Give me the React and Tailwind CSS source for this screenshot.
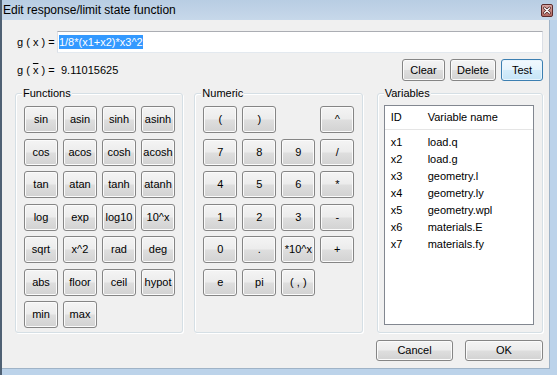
import React from "react";

const FUNCTIONS = [
  "sin", "asin", "sinh", "asinh",
  "cos", "acos", "cosh", "acosh",
  "tan", "atan", "tanh", "atanh",
  "log", "exp", "log10", "10^x",
  "sqrt", "x^2", "rad", "deg",
  "abs", "floor", "ceil", "hypot",
  "min", "max",
];

// null = empty cell in the keypad
const NUMERIC = [
  "(", ")", null, "^",
  "7", "8", "9", "/",
  "4", "5", "6", "*",
  "1", "2", "3", "-",
  "0", ".", "*10^x", "+",
  "e", "pi", "( , )", null,
];

const VARIABLES = [
  ["x1", "load.q"],
  ["x2", "load.g"],
  ["x3", "geometry.l"],
  ["x4", "geometry.ly"],
  ["x5", "geometry.wpl"],
  ["x6", "materials.E"],
  ["x7", "materials.fy"],
];

function Button({ children, className = "", primary = false }) {
  return (
    <button
      className={
        "flex items-center justify-center rounded-[3px] border text-[11px] leading-none text-black " +
        (primary
          ? "border-[#3c7fb1] bg-[linear-gradient(to_bottom,#f2f9fe_0%,#e6f4fc_48%,#d3ecfa_52%,#c6e5f7_100%)] shadow-[inset_0_0_0_1px_#e8f5fd] "
          : "border-[#858585] bg-[linear-gradient(to_bottom,#f4f4f4_0%,#ececec_48%,#dedede_52%,#d2d2d2_100%)] shadow-[inset_0_0_0_1px_#fbfbfb] ") +
        className
      }
    >
      {children}
    </button>
  );
}

function GroupBox({ title, className = "", children }) {
  return (
    <div
      className={
        "relative rounded-[3px] border border-[#d5dfe5] shadow-[inset_1px_1px_0_#ffffff,1px_1px_0_#ffffff] " +
        className
      }
    >
      <span className="absolute left-[6px] top-[-7px] bg-[#f0f0f0] px-[1px] text-[11px] leading-[13px] text-black">
        {title}
      </span>
      {children}
    </div>
  );
}

export default function App() {
  return (
    <div className="flex h-[375px] w-[557px] flex-col overflow-hidden border-l-2 border-[#4f6174] bg-[#bcd3ea] font-['Liberation_Sans',Arial,sans-serif]">
      {/* Title bar */}
      <div className="flex h-[20px] shrink-0 items-center bg-[linear-gradient(to_bottom,#b8cde3,#c7d8ea)] pl-[1px] pr-[4px]">
        <span className="text-[12px] leading-none text-black">Edit response/limit state function</span>
        <svg className="ml-auto" width="12" height="13" viewBox="0 0 12 13">
          <defs>
            <linearGradient id="cl" x1="0" y1="0" x2="0" y2="1">
              <stop offset="0" stopColor="#d9a9a6" />
              <stop offset="1" stopColor="#b2655d" />
            </linearGradient>
          </defs>
          <rect x="0.5" y="0.5" width="11" height="12" rx="1.5" fill="url(#cl)" stroke="#5b2b2b" />
          <path d="M3.5 4 L8.5 9 M8.5 4 L3.5 9" stroke="#4a2020" strokeWidth="2.6" strokeLinecap="round" />
          <path d="M3.5 4 L8.5 9 M8.5 4 L3.5 9" stroke="#ffffff" strokeWidth="1.3" strokeLinecap="round" />
        </svg>
      </div>

      {/* Client area */}
      <div className="mb-[6px] mr-[7px] flex flex-1 flex-col border-b border-r border-[#9fb3c7] bg-[#f0f0f0] pr-[6px] pt-[11px] text-[11px] text-black">
        {/* g(x) row */}
        <div className="flex h-[22px] items-center pl-[15px]">
          <span className="w-[40px] whitespace-pre">g ( x ) =</span>
          <div className="flex h-[22px] w-[487px] items-center border border-[#abadb3] border-b-[#e3e9ef] border-x-[#dbdfe6] bg-white pl-[1px]">
            <span className="bg-[#3399ff] leading-[14px] text-white">1/8*(x1+x2)*x3^2</span>
          </div>
        </div>

        {/* g(x̄) row */}
        <div className="mt-[6px] flex h-[22px] items-center pl-[15px]">
          <span className="w-[44px] whitespace-pre">
            g ( <span className="overline">x</span> ) =
          </span>
          <span>9.11015625</span>
          <div className="ml-auto flex gap-[5px]">
            <Button className="h-[22px] w-[43px]">Clear</Button>
            <Button className="h-[22px] w-[46px]">Delete</Button>
            <Button primary className="h-[22px] w-[42px]">Test</Button>
          </div>
        </div>

        {/* Groups */}
        <div className="mt-[12px] flex h-[240px] pl-[13px]">
          <GroupBox title="Functions" className="w-[169px] pl-[8px] pt-[12px]">
            <div className="grid grid-cols-[repeat(4,34px)] gap-x-[5px] gap-y-[5.5px]">
              {FUNCTIONS.map((f) => (
                <Button key={f} className="h-[27px]">{f}</Button>
              ))}
            </div>
          </GroupBox>

          <GroupBox title="Numeric" className="ml-[11px] w-[169px] pl-[8px] pt-[12px]">
            <div className="grid grid-cols-[repeat(4,34px)] gap-x-[5px] gap-y-[5.5px]">
              {NUMERIC.map((n, i) =>
                n === null ? (
                  <div key={i} className="h-[27px]" />
                ) : (
                  <Button key={i} className="h-[27px]">{n}</Button>
                )
              )}
            </div>
          </GroupBox>

          <GroupBox title="Variables" className="ml-[14px] w-[167px] pb-[7px] pl-[6px] pr-[8px] pt-[11px]">
            <div className="h-full border border-[#828790] bg-white">
              <div className="flex h-[24px] items-center border-b border-[#e5e5e5]">
                <span className="w-[43px] pl-[6px]">ID</span>
                <span>Variable name</span>
              </div>
              <div className="pt-[4px]">
                {VARIABLES.map(([id, name]) => (
                  <div key={id} className="flex h-[17px] items-center">
                    <span className="w-[43px] pl-[6px]">{id}</span>
                    <span>{name}</span>
                  </div>
                ))}
              </div>
            </div>
          </GroupBox>
        </div>

        {/* Dialog buttons */}
        <div className="mt-[7px] flex justify-end gap-[12px]">
          <Button className="h-[21px] w-[77px]">Cancel</Button>
          <Button className="h-[21px] w-[78px]">OK</Button>
        </div>
      </div>
    </div>
  );
}
